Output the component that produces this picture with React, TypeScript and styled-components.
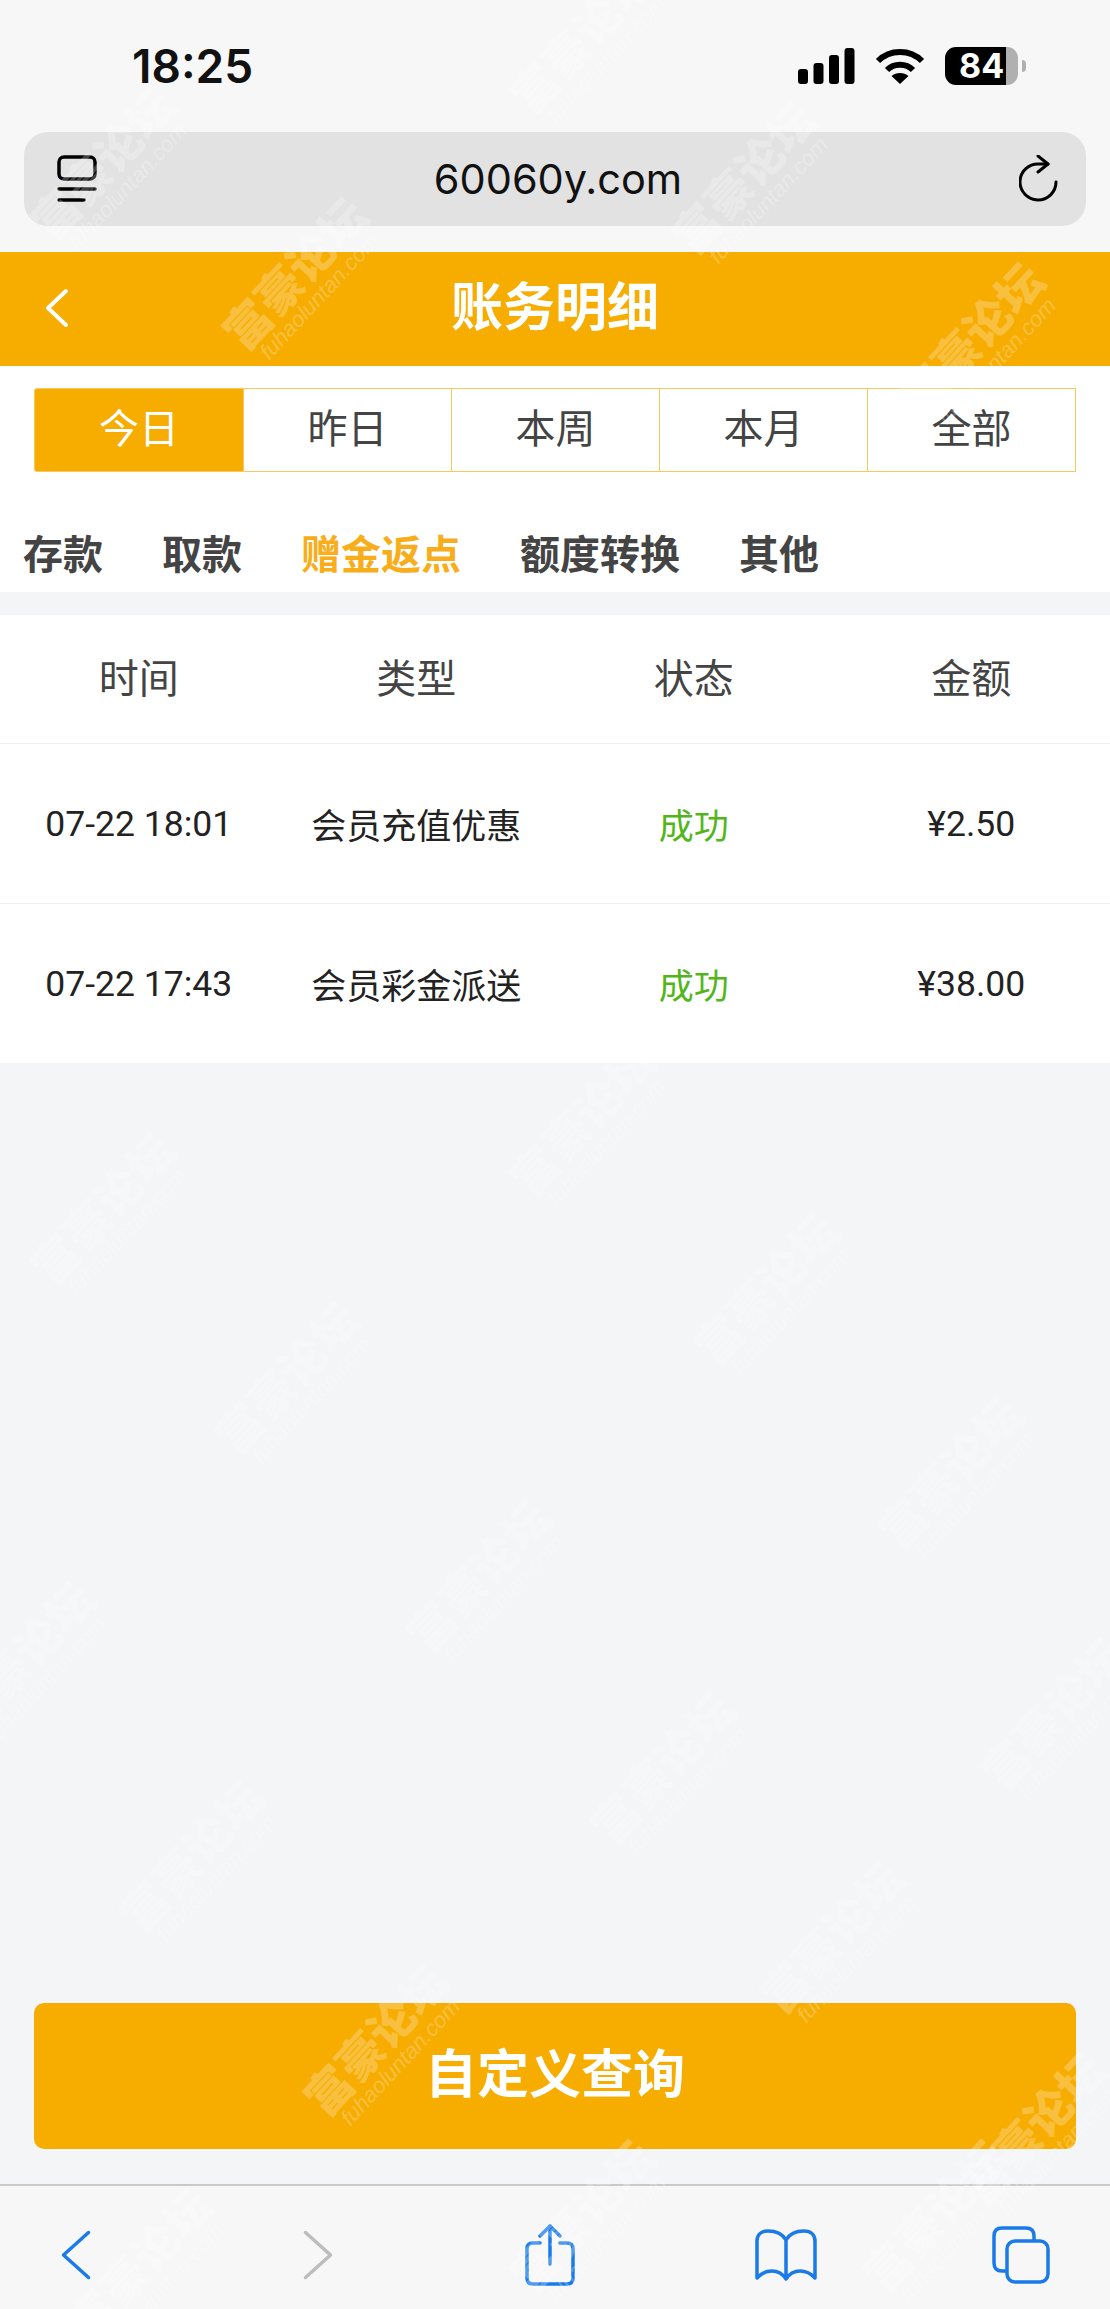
import React from 'react';
import styled, { createGlobalStyle } from 'styled-components';

const GlobalStyle = createGlobalStyle`
  html, body {
    margin: 0;
    padding: 0;
    background: #f4f5f7;
    font-family: "Noto Sans CJK SC", "Noto Sans", sans-serif;
  }
  * { box-sizing: border-box; }
`;

const ORANGE = '#f7ac00';

const Page = styled.div`
  position: relative;
  display: flex;
  flex-direction: column;
  width: 1110px;
  height: 2309px;
  overflow: hidden;
  background: #f4f5f7;
`;

const BrowserTop = styled.div`
  background: #f7f7f7;
  height: 252px;
  padding: 0 24px;
`;

const StatusBar = styled.div`
  display: flex;
  align-items: center;
  justify-content: space-between;
  height: 132px;
  padding: 0 68px 0 108px;
`;

const Clock = styled.span`
  font-family: Inter, sans-serif;
  font-size: 46px;
  font-weight: 600;
  color: #111;
`;

const StatusIcons = styled.div`
  display: flex;
  align-items: center;
  gap: 20px;
`;

const Battery = styled.div`
  position: relative;
  width: 73px;
  height: 38px;
  border-radius: 11px;
  background: linear-gradient(to right, #000 84%, #b0b0b0 84%);
  color: #fff;
  font-family: Inter, sans-serif;
  font-size: 34px;
  font-weight: 700;
  line-height: 38px;
  padding-left: 14px;

  &::after {
    content: '';
    position: absolute;
    right: -8px;
    top: 13px;
    width: 4px;
    height: 12px;
    border-radius: 0 4px 4px 0;
    background: #b0b0b0;
  }
`;

const AddressBar = styled.div`
  display: grid;
  grid-template-columns: 1fr auto 1fr;
  align-items: center;
  height: 94px;
  padding: 0 27px 0 33px;
  border-radius: 24px;
  background: #e2e2e2;

  & > svg:last-child {
    justify-self: end;
  }
`;

const Url = styled.span`
  font-family: Inter, sans-serif;
  font-size: 41.500px;
  color: #111;
`;

const Header = styled.header`
  position: relative;
  display: flex;
  align-items: center;
  justify-content: center;
  height: 114px;
  padding-bottom: 12px;
  background: ${ORANGE};
  color: #fff;
  font-size: 52px;
  font-weight: 700;
`;

const BackLink = styled.span`
  position: absolute;
  left: 44px;
  top: 35px;
  display: flex;
`;

const Filters = styled.div`
  display: flex;
  padding: 22px 34px 0;
  background: #fff;
`;

const FilterButton = styled.div<{ $active?: boolean }>`
  flex: 1;
  height: 84px;
  padding-bottom: 9px;
  display: flex;
  align-items: center;
  justify-content: center;
  font-size: 40px;
  color: ${(p) => (p.$active ? '#fff' : '#444')};
  background: ${(p) => (p.$active ? ORANGE : '#fff')};
  border: 1px solid #f9c85c;
  border-left-width: ${(p) => (p.$active ? '1px' : '0')};

  &:first-child {
    flex: 0 0 210px;
    border-radius: 3px 0 0 3px;
  }
`;

const Categories = styled.div`
  display: flex;
  align-items: center;
  gap: 59px;
  height: 120px;
  padding: 40px 23px 0;
  background: #fff;
`;

const Category = styled.span<{ $active?: boolean }>`
  font-size: 40px;
  font-weight: 700;
  color: ${(p) => (p.$active ? '#f8ad1a' : '#444')};
`;

const Records = styled.section`
  margin-top: 23px;
  background: #fff;
`;

const Row = styled.div<{ $height: number; $last?: boolean }>`
  display: grid;
  grid-template-columns: repeat(4, 1fr);
  align-items: center;
  height: ${(p) => p.$height}px;
  border-bottom: ${(p) => (p.$last ? 'none' : '1px solid #f0f0f0')};
`;

const HeadCell = styled.span`
  text-align: center;
  margin-bottom: 6px;
  font-size: 40px;
  color: #444;
`;

const Cell = styled.span<{ $success?: boolean; $latin?: boolean }>`
  text-align: center;
  font-size: ${(p) => (p.$latin ? '35.500px' : '35px')};
  color: ${(p) => (p.$success ? '#52b61a' : '#222')};
  font-family: ${(p) => (p.$latin ? 'Roboto, sans-serif' : 'inherit')};
`;

const Spacer = styled.div`
  flex: 1;
`;

const QueryButton = styled.button`
  display: block;
  margin: 0 34px 35px;
  height: 146px;
  padding: 0 0 12px;
  border: 0;
  border-radius: 10px;
  background: ${ORANGE};
  color: #fff;
  font-family: inherit;
  font-size: 52px;
  font-weight: 700;
`;

const Toolbar = styled.nav`
  display: grid;
  grid-template-columns: 242px 223px 230px 237px auto;
  justify-items: start;
  align-items: center;
  height: 125px;
  border-top: 2px solid #c9c9c9;
  background: #f7f7f7;
  padding: 15px 0 0 60px;
`;

const WatermarkLayer = styled.div`
  position: absolute;
  inset: 0;
  pointer-events: none;
`;

const Watermark = styled.div<{ $x: number; $y: number }>`
  position: absolute;
  left: ${(p) => p.$x}px;
  top: ${(p) => p.$y}px;
  width: 190px;
  transform: translate(-50%, -50%) rotate(-47deg);
  color: rgba(255, 255, 255, 0.26);
  text-align: center;
  line-height: 1;
  white-space: nowrap;
`;

const WatermarkName = styled.div`
  font-size: 46px;
  font-weight: 900;
`;

const WatermarkSite = styled.div`
  margin-top: 2px;
  font-family: "Liberation Sans", sans-serif;
  font-size: 22px;
  font-style: italic;
`;

const filters = ['今日', '昨日', '本周', '本月', '全部'];
const categories = ['存款', '取款', '赠金返点', '额度转换', '其他'];
const columns = ['时间', '类型', '状态', '金额'];
const records = [
  { time: '07-22 18:01', type: '会员充值优惠', status: '成功', amount: '¥2.50' },
  { time: '07-22 17:43', type: '会员彩金派送', status: '成功', amount: '¥38.00' },
];

// centres of the diagonal site stamps laid over the screenshot
const stamps = [
  [302, 280], [979, 345], [383, 2046], [1040, 2135], [839, 1943], [199, 1862],
  [486, 1582], [670, 1774], [957, 1479], [294, 1384], [773, 1295], [110, 1215],
  [589, 1126], [29, 1664], [751, 184], [110, 170], [589, 44], [589, 2222],
  [1060, 1720], [147, 2270], [942, 2222],
];

const Signal = () => (
  <svg width="57" height="36" viewBox="0 0 57 36" fill="#000">
    <rect x="0" y="21" width="10" height="15" rx="3" />
    <rect x="15.500" y="15" width="10" height="21" rx="3" />
    <rect x="31" y="7" width="10" height="29" rx="3" />
    <rect x="46.500" y="0" width="10" height="36" rx="3" />
  </svg>
);

const Wifi = () => (
  <svg width="50" height="36" viewBox="0 0 50 36" fill="none" stroke="#000" strokeWidth="6">
    <path d="M3 13 C15 1 35 1 47 13" />
    <path d="M12 22 C19 15 31 15 38 22" />
    <path d="M25 36 L16.500 28 C21 24 29 24 33.500 28 Z" fill="#000" stroke="none" />
  </svg>
);

const ReaderIcon = () => (
  <svg width="40" height="48" viewBox="0 0 40 48" fill="none" stroke="#000" strokeWidth="3.500" strokeLinecap="round">
    <rect x="2" y="2" width="36" height="22" rx="5" />
    <path d="M2 34 H38" />
    <path d="M2 45 H27" />
  </svg>
);

const ReloadIcon = () => (
  <svg width="40" height="48" viewBox="0 0 40 48" fill="none" stroke="#000" strokeWidth="3" strokeLinecap="round" strokeLinejoin="round">
    <path d="M37 27 A18 18 0 1 1 20 9 L29 9" />
    <path d="M19 1 L29 9 L19 17" />
  </svg>
);

const Chevron = ({ color, flip, width, height, stroke }: { color: string; flip?: boolean; width: number; height: number; stroke: number }) => (
  <svg width={width} height={height} viewBox={`0 0 ${width} ${height}`} fill="none" stroke={color} strokeWidth={stroke} strokeLinecap="round" strokeLinejoin="round">
    {flip ? (
      <path d={`M${stroke} ${stroke} L${width - stroke} ${height / 2} L${stroke} ${height - stroke}`} />
    ) : (
      <path d={`M${width - stroke} ${stroke} L${stroke} ${height / 2} L${width - stroke} ${height - stroke}`} />
    )}
  </svg>
);

const ShareIcon = () => (
  <svg width="50" height="62" viewBox="0 0 50 62" fill="none" stroke="#1a7ae8" strokeWidth="3.500" strokeLinecap="round" strokeLinejoin="round">
    <path d="M15 19 H8 Q2 19 2 25 V54 Q2 60 8 60 H42 Q48 60 48 54 V25 Q48 19 42 19 H35" />
    <path d="M25 40 V2" />
    <path d="M15 12 L25 2 L35 12" />
  </svg>
);

const BookIcon = () => (
  <svg width="62" height="52" viewBox="0 0 62 52" fill="none" stroke="#1a7ae8" strokeWidth="3.500" strokeLinecap="round" strokeLinejoin="round">
    <path d="M31 11 C27 4 20 2 13 2 C6 2 2 6 2 12 V49 C10 40 24 39 31 50 C38 39 52 40 60 49 V12 C60 6 56 2 49 2 C42 2 35 4 31 11 V50" />
  </svg>
);

const TabsIcon = () => (
  <svg width="58" height="58" viewBox="0 0 58 58" fill="none" stroke="#1a7ae8" strokeWidth="3.500" strokeLinejoin="round">
    <path d="M15 45 H10 Q2 45 2 37 V10 Q2 2 10 2 H34 Q42 2 42 10 V15" />
    <rect x="15" y="15" width="41" height="41" rx="8" />
  </svg>
);

const App: React.FC = () => {
  return (
    <Page>
      <GlobalStyle />
      <BrowserTop>
        <StatusBar>
          <Clock>18:25</Clock>
          <StatusIcons>
            <Signal />
            <Wifi />
            <Battery>84</Battery>
          </StatusIcons>
        </StatusBar>
        <AddressBar>
          <ReaderIcon />
          <Url>60060y.com</Url>
          <ReloadIcon />
        </AddressBar>
      </BrowserTop>

      <Header>
        <BackLink>
          <Chevron color="#fff" width={26} height={42} stroke={4} />
        </BackLink>
        账务明细
      </Header>

      <Filters>
        {filters.map((f, i) => (
          <FilterButton key={f} $active={i === 0}>{f}</FilterButton>
        ))}
      </Filters>

      <Categories>
        {categories.map((c) => (
          <Category key={c} $active={c === '赠金返点'}>{c}</Category>
        ))}
      </Categories>

      <Records>
        <Row $height={129}>
          {columns.map((c) => (
            <HeadCell key={c}>{c}</HeadCell>
          ))}
        </Row>
        {records.map((r, i) => (
          <Row key={r.time} $height={i === 0 ? 160 : 159} $last={i === records.length - 1}>
            <Cell $latin>{r.time}</Cell>
            <Cell>{r.type}</Cell>
            <Cell $success>{r.status}</Cell>
            <Cell $latin>{r.amount}</Cell>
          </Row>
        ))}
      </Records>

      <Spacer />
      <QueryButton>自定义查询</QueryButton>

      <Toolbar>
        <Chevron color="#1a7ae8" width={32} height={52} stroke={3.5} />
        <Chevron color="#bdbdbd" flip width={32} height={52} stroke={3.5} />
        <ShareIcon />
        <BookIcon />
        <TabsIcon />
      </Toolbar>

      <WatermarkLayer>
        {stamps.map(([x, y]) => (
          <Watermark key={`${x}-${y}`} $x={x} $y={y}>
            <WatermarkName>富豪论坛</WatermarkName>
            <WatermarkSite>fuhaoluntan.com</WatermarkSite>
          </Watermark>
        ))}
      </WatermarkLayer>
    </Page>
  );
};

export default App;
